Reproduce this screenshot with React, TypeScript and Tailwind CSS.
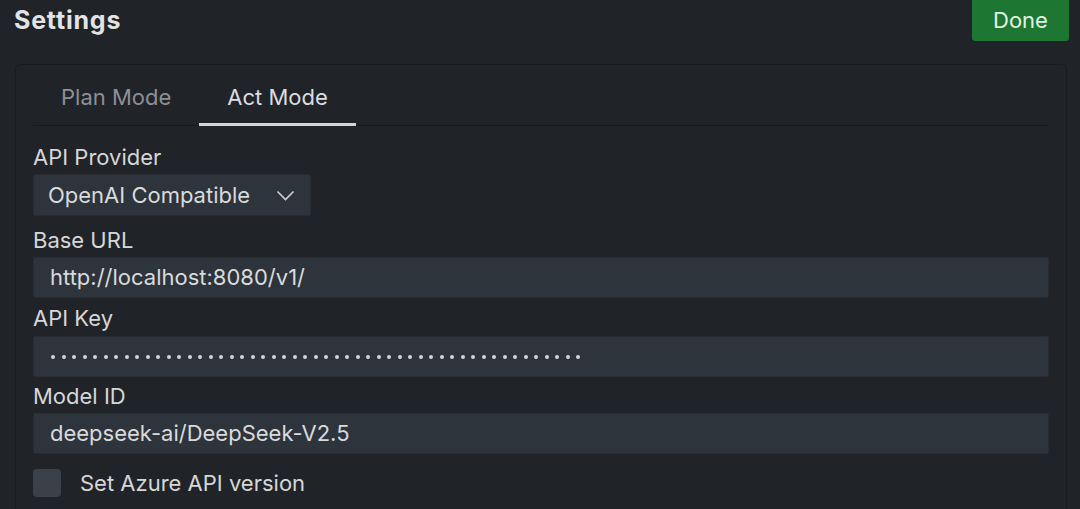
import React from "react";

const font = { fontFamily: "Inter, 'Noto Sans', sans-serif" };

function Label({ text, className }: { text: string; className: string }) {
  return (
    <div className={`h-6 text-[22px] leading-6 text-[#d6d7d9] ${className}`}>
      {text}
    </div>
  );
}

function Field({ children, className }: { children: React.ReactNode; className: string }) {
  return (
    <div
      className={`flex h-[41px] items-center rounded-[2px] border border-[#282d33] bg-[#2e343b] pl-[16px] text-[22px] text-[#d9dadc] ${className}`}
    >
      {children}
    </div>
  );
}

export default function App() {
  const dots = Array.from({ length: 51 });
  return (
    <div
      className="h-[509px] w-[1080px] overflow-hidden bg-[#202327] pr-[11px] pl-[15px]"
      style={font}
    >
      <div className="flex h-[41px] items-center justify-between">
        <h1 className="-ml-[1px] text-[25px] font-bold tracking-[0.8px] text-[#e2e3e5]">
          Settings
        </h1>
        <button className="h-[41px] w-[97px] rounded-b-[3px] bg-[#1d7631] text-[22px] text-[#e3f2e4]">
          Done
        </button>
      </div>

      <div className="mt-[23px] h-[460px] w-[1052px] rounded-[5px] border border-[#191b1e] px-[17px]">
        <div className="flex h-[61px] border-b border-[#17191c]">
          <div className="flex h-[60px] items-center px-7 pt-[4px] text-[22px] text-[#8d9197]">
            Plan Mode
          </div>
          <div className="relative flex h-[60px] items-center px-7 pt-[4px] text-[22px] text-[#dcdde0]">
            Act Mode
            <span className="absolute right-0 bottom-[-1px] left-0 h-[3px] bg-[#d3d4d7]" />
          </div>
        </div>

        <div className="flex flex-col">
          <Label text="API Provider" className="mt-[19px]" />
          <div className="mt-[5px] flex h-[42px] w-[278px] items-center justify-between rounded-[2px] border border-[#282d33] bg-[#2e343b] pr-[15px] pl-[14px] text-[22px] text-[#d9dadc]">
            <span>OpenAI Compatible</span>
            <svg width="19" height="11" viewBox="0 0 19 11" fill="none">
              <path d="M1.5 1.5 L9.5 9.5 L17.5 1.5" stroke="#cfd0d3" strokeWidth="1.6" />
            </svg>
          </div>

          <Label text="Base URL" className="mt-[12px]" />
          <Field className="mt-[5px]">http://localhost:8080/v1/</Field>

          <Label text="API Key" className="mt-[8px]" />
          <Field className="mt-[6px]">
            <div className="flex gap-[6.5px] pl-[1px]">
              {dots.map((_, i) => (
                <span key={i} className="h-[4px] w-[4px] rounded-full bg-[#d4d5d8]" />
              ))}
            </div>
          </Field>

          <Label text="Model ID" className="mt-[7px]" />
          <Field className="mt-[5px]">deepseek-ai/DeepSeek-V2.5</Field>

          <div className="mt-[15px] flex h-[28px] items-center">
            <span className="h-[28px] w-[28px] rounded-[4px] bg-[#3b4149]" />
            <span className="ml-[19px] text-[22px] text-[#d6d7d9]">Set Azure API version</span>
          </div>
        </div>
      </div>
    </div>
  );
}
